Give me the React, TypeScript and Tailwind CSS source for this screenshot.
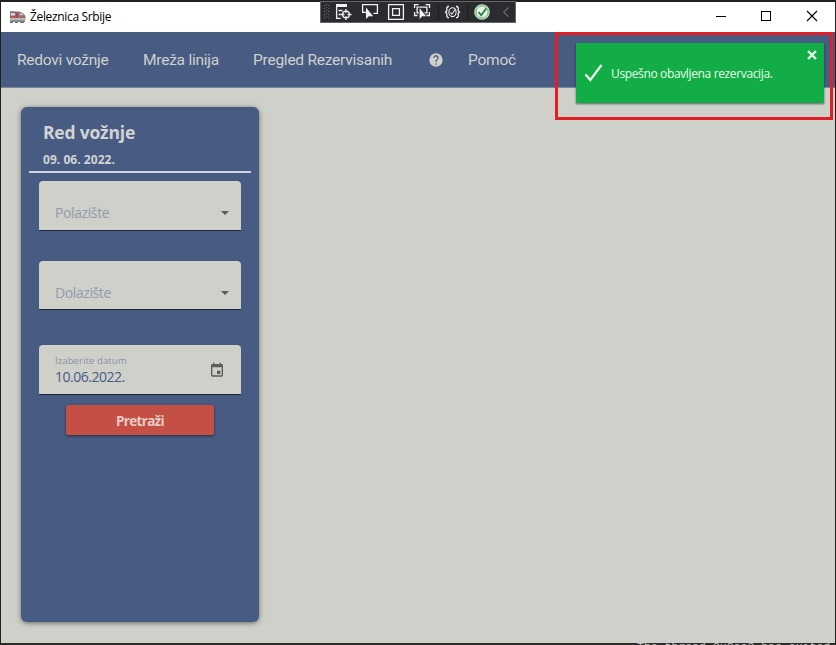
import React from "react";

const SEGOE = "font-['Open_Sans','Noto_Sans',sans-serif]";

function TrainIcon() {
  return (
    <svg width="17" height="13" viewBox="0 0 17 13" className="shrink-0">
      <path d="M1 0.5h9l4 1.5 2.5 3v4H1z" fill="#8d7f83" />
      <path d="M1 0.5h5v1.5H1zM6 1.5h5l4 2.5H9z" fill="#a95850" />
      <path d="M2 2h4v2.5H2zM10 2.5h3l1.5 1.5H11z" fill="#cfdae4" />
      <path d="M1 5h8l2 .7h5v1H1z" fill="#b9544c" />
      <path d="M6.5 2h2.5v4H6.5z" fill="#91504e" />
      <path d="M1 7h15v2H1z" fill="#b5b8be" />
      <path d="M1 9h15v2H1z" fill="#8f8b8d" />
      <path d="M1 11h3v1H1zM6 11h3v1H6zM11 11h4v1h-4z" fill="#69656a" />
    </svg>
  );
}

function TitleBar() {
  return (
    <header className="flex h-[30px] shrink-0 items-center bg-white pl-2">
      <TrainIcon />
      <span className={`ml-1 -mt-px whitespace-nowrap text-[12px] leading-4 tracking-[-0.34px] text-black ${SEGOE}`}>
        Železnica Srbije
      </span>
      <svg width="120" height="30" viewBox="0 0 120 30" className="ml-auto" fill="none" stroke="#000" shapeRendering="crispEdges">
        <path d="M1 14.5h10" />
        <rect x="46.5" y="9.5" width="9" height="9" />
        <path d="M92 9l10 10M102 9l-10 10" shapeRendering="auto" strokeWidth="1.1" />
      </svg>
    </header>
  );
}

function NavBar() {
  return (
    <nav className="flex h-14 shrink-0 items-center whitespace-nowrap border-b border-[#7886a0] bg-[#485b83] pl-4 font-['Roboto',sans-serif] text-[15.5px] leading-5 tracking-[-0.24px] text-[#cfd1cc]">
      <span className="w-[126px]">Redovi vožnje</span>
      <span className="w-[110px]">Mreža linija</span>
      <span className="w-[175px]">Pregled Rezervisanih</span>
      <svg width="16" height="16" viewBox="0 0 24 24" className="mr-6" fill="#d0d1cb">
        <path d="M12 2a10 10 0 1 0 0 20 10 10 0 0 0 0-20zm1 17h-2v-2h2v2zm2.07-7.75l-.9.92C13.45 12.9 13 13.5 13 15h-2v-.5c0-1.1.45-2.1 1.17-2.83l1.24-1.26A2 2 0 1 0 10 9H8a4 4 0 1 1 7.07 2.25z" />
      </svg>
      <span>Pomoć</span>
    </nav>
  );
}

function SelectField({ label, className }: { label: string; className: string }) {
  return (
    <div className={`flex w-[202px] shrink-0 items-end justify-between rounded-t-[4px] border-b border-[#1d2636] bg-[#cfd0ca] pl-4 pr-3 ${className}`}>
      <span className="text-[14px] leading-5 tracking-[-0.4px] text-[#929cab]">{label}</span>
      <svg width="8" height="4" viewBox="0 0 8 4" className="mb-2">
        <path d="M0 0h8L4 4z" fill="#5d5d5b" />
      </svg>
    </div>
  );
}

function SearchCard() {
  return (
    <section className={`flex h-[515px] w-[238px] flex-col items-center rounded-[6px] bg-[#485b83] shadow-[0_1px_5px_rgba(0,0,0,0.5)] ${SEGOE}`}>
      <div className="flex h-[66px] w-[222px] shrink-0 flex-col border-b-2 border-[#cfd2e0] pl-[14px] font-bold text-[#d2d4d2]">
        <h1 className="mt-[13px] text-[17.5px] leading-6 tracking-[-0.2px]">Red vožnje</h1>
        <p className="mt-2 text-[12px] leading-4 tracking-[0.04px]">09. 06. 2022.</p>
      </div>
      <SelectField label="Polazište" className="mt-2 h-[50px] pb-[7px]" />
      <SelectField label="Dolazište" className="mt-[30px] h-[49px] pb-[6px]" />
      <div className="mt-[35px] flex h-[50px] w-[202px] shrink-0 items-center justify-between rounded-t-[4px] border-b border-[#1d2636] bg-[#cfd0ca] pl-4 pr-4">
        <div className="flex flex-col pt-px">
          <span className="text-[9.5px] leading-3 tracking-[0.1px] text-[#8792a6]">Izaberite datum</span>
          <span className="mt-px text-[14px] leading-[18px] tracking-[-0.48px] text-[#485b83]">10.06.2022.</span>
        </div>
        <svg width="16" height="16" viewBox="0 0 24 24" fill="#5c5c59">
          <path d="M19 3h-1V1h-2v2H8V1H6v2H5a2 2 0 0 0-2 2v15a2 2 0 0 0 2 2h14a2 2 0 0 0 2-2V5a2 2 0 0 0-2-2zm0 17H5V8h14v12zm-2-7h-5v5h5z" />
        </svg>
      </div>
      <button className="mt-[10px] flex h-[30px] w-[148px] shrink-0 items-center justify-center rounded-[2px] bg-[#c45045] pt-[2px] text-[13.5px] font-bold tracking-[-0.7px] text-[#e5ccc4] shadow-[0_1px_3px_rgba(0,0,0,0.5)]">
        Pretraži
      </button>
    </section>
  );
}

function DebugToolbar() {
  return (
    <div className="absolute left-[320px] top-[1px] h-[22px] w-[196px] border border-[#66666a] bg-[#2b2b30]">
      <svg width="194" height="20" viewBox="321 2 194 20" fill="none" stroke="#f2f2f2" strokeWidth="1.3">
        <path d="M324.5 5v15M328.5 5v15M326.5 4v15" stroke="#66666a" strokeWidth="1" strokeDasharray="1 2" />
        <path d="M336 4h11v3h-11z" fill="#f2f2f2" stroke="none" />
        <path d="M336.6 7v11.4h4M338.5 10.5h4M338.5 14.5h2" />
        <circle cx="346" cy="14.5" r="3.4" />
        <path d="M346 9v4M346 16v4M340.5 14.5h4M347.5 14.5h4" />
        <path d="M366 12.4h-3.4V4.6h14.8v8.8h-4" />
        <path d="M366 7.5v11.5l2.8-2.8h4.4z" fill="#f2f2f2" stroke="none" />
        <path d="M388.6 4.6h14.8v14.8h-14.8z M392.6 8.6h6.8v6.8h-6.8z" />
        <path d="M414.6 8V4.6h4M425.5 4.6h4V8M414.6 12v3.5h3M429.4 12v3.5h-3M419 12.8h-1.9v-5.6h9.8v5.6h-2.4" />
        <path d="M419.3 7.5v12l2.8-3h4.6z" fill="#f2f2f2" stroke="#2b2b30" strokeWidth="0.5" />
        <path d="M438.5 4v16M467.5 4v16" stroke="#1d1d20" strokeWidth="1" />
        <path d="M449 6.5h-1.2l-1 1.3v3l-1.3 1.4 1.3 1.4v2.8l1 1.3h1.2M456 6.5h1.2l1 1.3v3l1.3 1.4-1.3 1.4v2.8l-1 1.3H456" />
        <ellipse cx="452.5" cy="12.2" rx="3.6" ry="4.4" strokeWidth="1.1" />
        <path d="M450.5 12.5l1.4 1.7 3.6-5.2" strokeWidth="1.1" />
        <circle cx="482" cy="12" r="7.2" fill="#e9f5eb" stroke="#b4dfb8" />
        <circle cx="482" cy="12" r="6.1" stroke="#4b9b59" strokeWidth="0.8" />
        <path d="M478.5 12l2.7 3.2 5-6.8" stroke="#2b8240" strokeWidth="1.8" />
        <path d="M508.5 7.5l-4.8 4.7 4.8 4.7" stroke="#66666a" />
      </svg>
    </div>
  );
}

function Toast() {
  return (
    <div className={`absolute left-[576px] top-[43px] flex h-[60px] w-[248px] items-center bg-[#12ad46] pl-2 text-[#e7ffe9] shadow-[0_1px_2px_rgba(0,0,0,0.55)] ${SEGOE}`}>
      <svg width="20" height="20" viewBox="0 0 20 20" fill="none" stroke="#f0fff1" strokeWidth="2.2">
        <path d="M1.5 11.5l4.8 5.5L17.5 2" />
      </svg>
      <span className="ml-[7px] mt-[2px] whitespace-nowrap text-[12px] leading-4 tracking-[-0.36px]">Uspešno obavljena rezervacija.</span>
      <svg width="10" height="10" viewBox="0 0 10 10" className="absolute right-[7px] top-[7px]" fill="none" stroke="#e7ffe9" strokeWidth="2.3">
        <path d="M1 1l8 8M9 1l-8 8" />
      </svg>
    </div>
  );
}

export default function App() {
  return (
    <div className="relative flex h-[645px] w-[836px] flex-col overflow-hidden bg-[#202021]">
      <div className="mt-[2px] flex h-[641px] shrink-0 flex-col pl-px pr-px">
        <TitleBar />
        <NavBar />
        <main className="flex flex-1 bg-[#cfd0ca] pl-5 pt-[19px]">
          <SearchCard />
        </main>
      </div>
      <div className="h-[2px] shrink-0 overflow-hidden bg-[#2b2b2b] pl-[637px]">
        <p className="-mt-[2px] whitespace-nowrap font-['Liberation_Mono',monospace] text-[11.5px] leading-3 text-[#c5c5c5]">The thread 0x2ce8 has exited</p>
      </div>
      <DebugToolbar />
      <Toast />
      <div className="absolute left-[555px] top-[32px] h-[88px] w-[278px] border-[3px] border-[#e41e26]" />
    </div>
  );
}
